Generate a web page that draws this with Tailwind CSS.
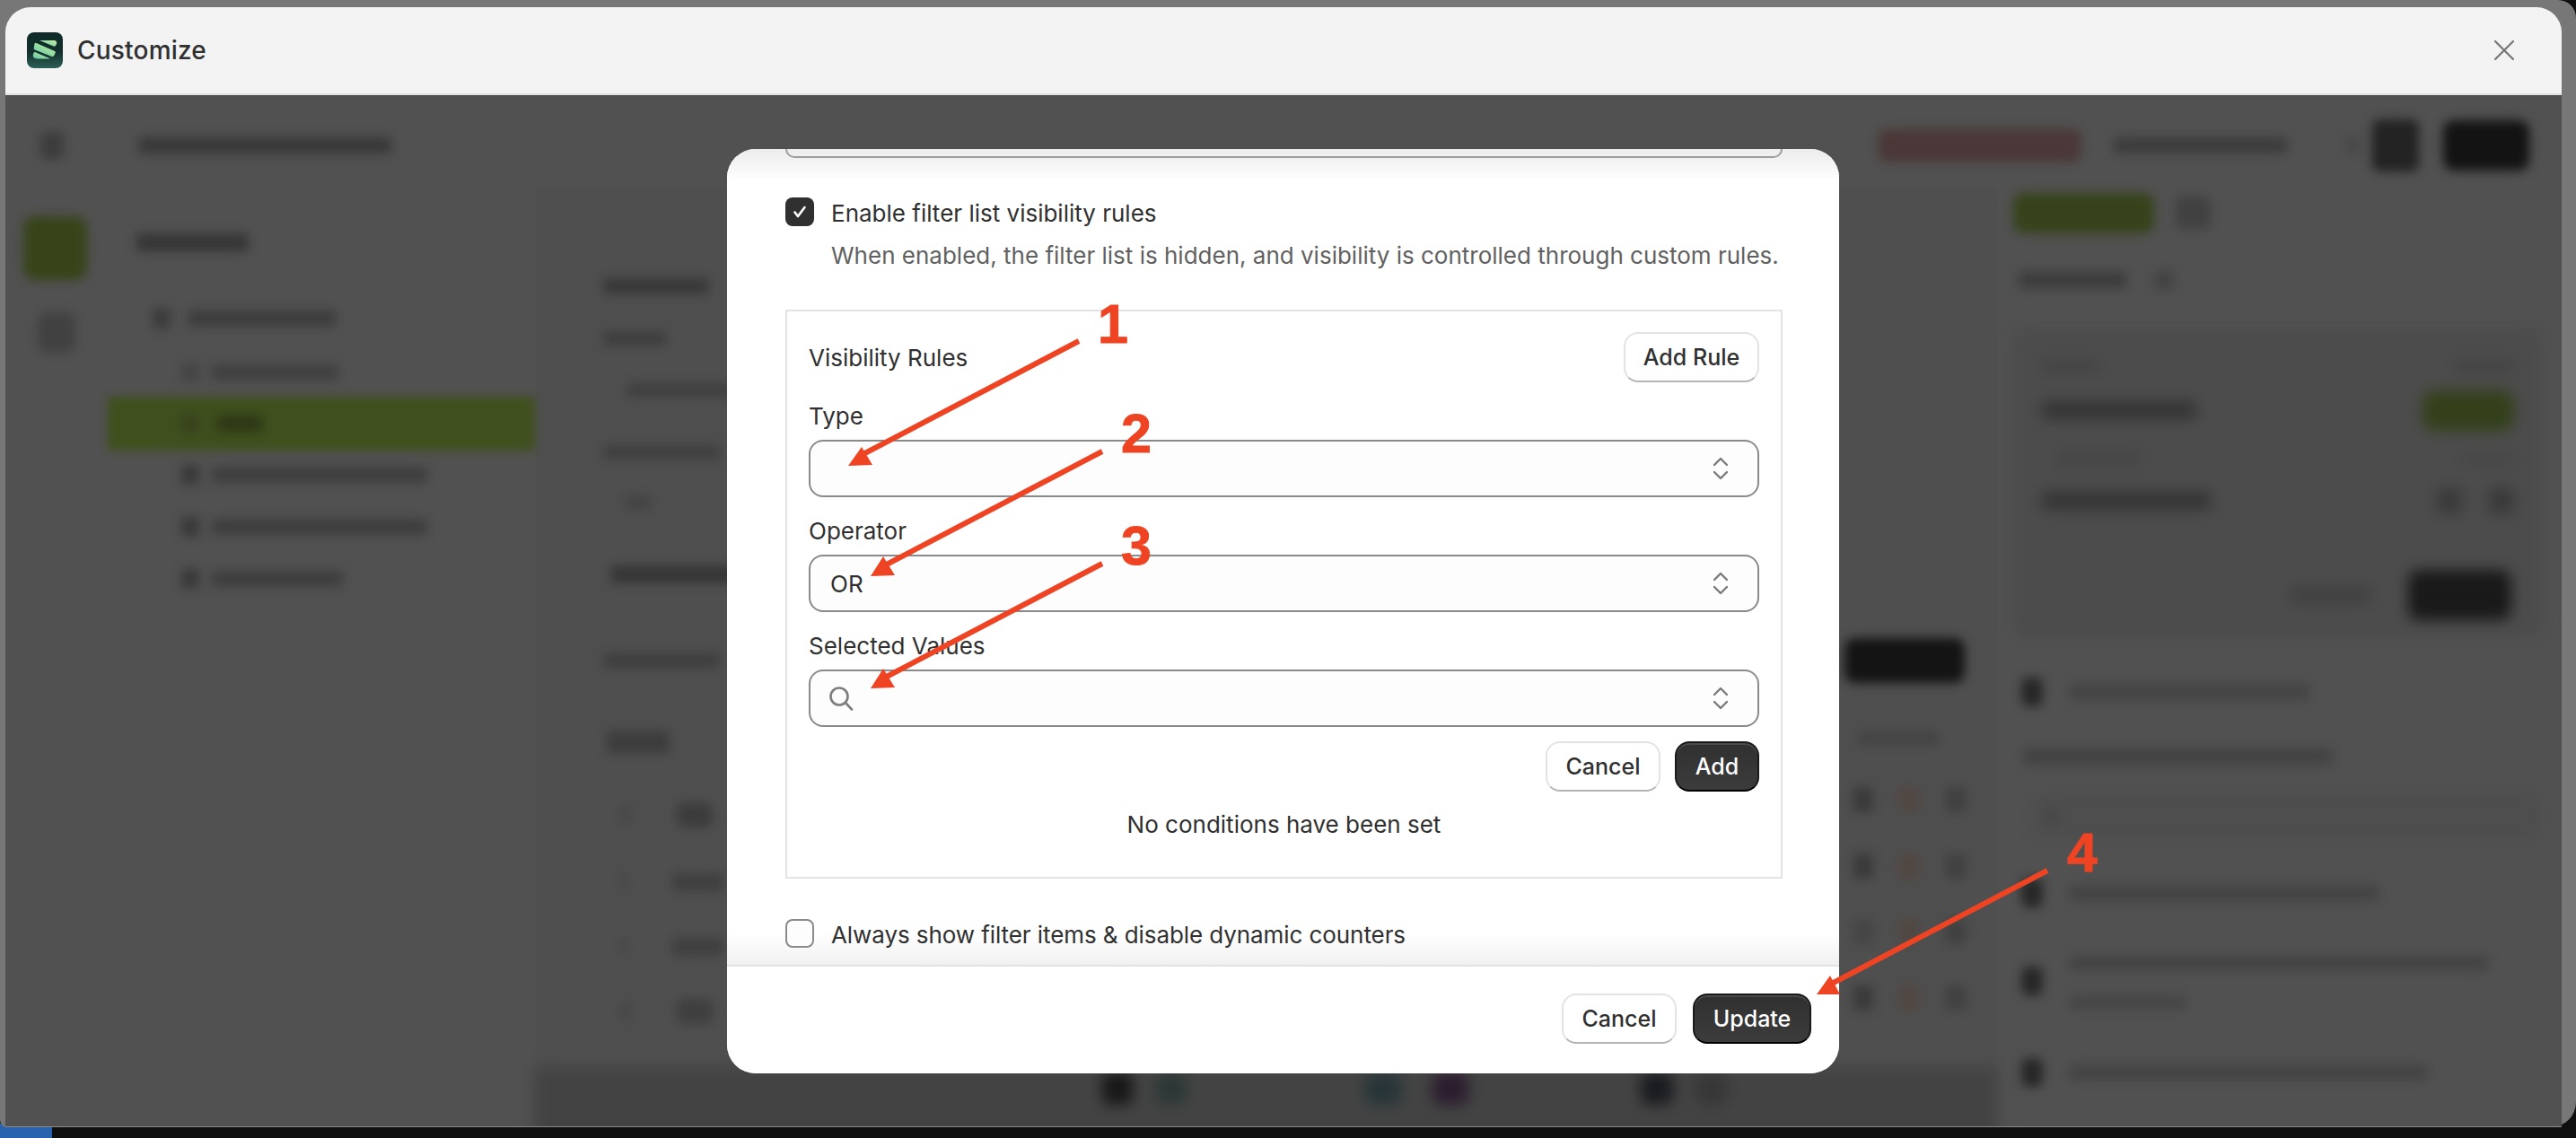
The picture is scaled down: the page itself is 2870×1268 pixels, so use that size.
<!DOCTYPE html>
<html lang="en">
<head>
<meta charset="utf-8">
<title>Customize</title>
<script src="https://cdn.jsdelivr.net/npm/@tailwindcss/browser@4"></script>
</head>
<body class="m-0 bg-[#0f0f0f]">
<div class="relative w-[2870px] h-[1268px] overflow-hidden bg-[#0f0f0f] font-['Inter',sans-serif] text-[#303030]">

  <!-- desktop strip under the window -->
  <div class="flex h-[1268px] items-end">
    <div class="w-[58px] h-[16px] bg-[#2a63ad]"></div>
  </div>

  <!-- outer dimmed frame -->
  <div class="absolute left-0 top-0 w-[2870px] h-[1256px] bg-[#777777] rounded-br-[28px] rounded-tr-[20px] rounded-bl-[8px] px-[6px] pt-[8px]">
    <div class="flex flex-col w-[2848px] h-[1247px] rounded-t-[28px] overflow-hidden">
      <!-- header -->
      <div class="flex items-center h-[98px] shrink-0 bg-[#f3f3f3] border-b-2 border-[#e3e3e3] pl-[24px] pr-[53px]">
        <svg class="w-[40px] h-[40px] shrink-0" viewBox="0 0 40 40">
          <defs>
            <linearGradient id="lg" x1="0" y1="0" x2="0" y2="1"><stop offset="0" stop-color="#0f2a28"/><stop offset=".55" stop-color="#12302d"/><stop offset="1" stop-color="#2c5f57"/></linearGradient>
            <linearGradient id="ls" x1="0" y1="1" x2="1" y2="0"><stop offset="0" stop-color="#5fc6a0"/><stop offset="1" stop-color="#c9efa4"/></linearGradient>
          </defs>
          <rect width="40" height="40" rx="8" fill="url(#lg)"/>
          <path d="M14 9h16c2.600 0 3.800 2 3 3.700l-.8 1.700c-.6 1.100-1.600 1.500-2.700 1.100L14 9Z" fill="url(#ls)"/>
          <path d="M8.500 12.700c.4-.8 1.300-1.100 2-.8l20.500 9c.9.4 1 1.400.6 2.200l-1.500 2.900c-.5.9-1.400 1.200-2.200.9L8.700 19.400c-1-.4-1.300-1.500-.9-2.400Z" fill="url(#ls)"/>
          <path d="M7.700 22.800c.4-.7 1.100-.9 1.800-.6L26 29.500H13c-3.600 0-6.200-1-6.200-3.800 0-1 .4-2 .9-2.900Z" fill="url(#ls)"/>
        </svg>
        <span class="ml-[16px] text-[28px] font-medium leading-none tracking-[0.2px]">Customize</span>
        <svg class="ml-auto w-[22px] h-[22px]" viewBox="0 0 22 22" fill="none" stroke="#757575" stroke-width="2.200" stroke-linecap="round"><path d="M1 1l20 20M21 1L1 21"/></svg>
      </div>

      <!-- blurred page behind the modal -->
      <div class="flex-1 bg-[#515151] overflow-hidden" aria-hidden="true">
        <div class="flex flex-col h-[calc(100%+24px)]">
          <!-- top bar -->
          <div class="flex items-center h-[104px] shrink-0 pt-[8px]">
            <div class="blur-[6px] ml-[39px] w-[26px] h-[30px] rounded-md bg-[#3c3c3c]"></div>
            <div class="blur-[6px] ml-[83px] w-[282px] h-[18px] rounded bg-[#383838]"></div>
            <div class="blur-[6px] ml-[1657px] w-[225px] h-[36px] rounded-lg bg-[#4b3737]"></div>
            <div class="blur-[6px] ml-[37px] w-[193px] h-[18px] rounded bg-[#3c3c3c]"></div>
            <div class="blur-[6px] ml-[67px] w-[14px] h-[20px] rounded bg-[#474747]"></div>
            <div class="blur-[6px] ml-[14px] w-[52px] h-[58px] rounded-lg bg-[#232323]"></div>
            <div class="blur-[6px] ml-[27px] w-[96px] h-[56px] rounded-xl bg-[#131313]"></div>
          </div>
          <div class="flex flex-1 min-h-0">
            <!-- rail -->
            <div class="flex flex-col w-[114px] shrink-0 pl-[20px]">
              <div class="blur-[6px] mt-[31px] w-[71px] h-[71px] rounded-xl bg-[#374419]"></div>
              <div class="blur-[6px] mt-[36px] ml-[16px] w-[42px] h-[45px] rounded-xl bg-[#414141]"></div>
            </div>
            <!-- tree -->
            <div class="flex flex-col w-[476px] shrink-0">
              <div class="blur-[6px] mt-[50px] ml-[32px] w-[125px] h-[20px] rounded bg-[#363636]"></div>
              <div class="flex items-center h-[24px] mt-[63px] ml-[50px]"><div class="blur-[6px] w-[20px] h-[24px] rounded bg-[#3c3c3c]"></div><div class="blur-[6px] ml-[20px] w-[164px] h-[18px] rounded bg-[#3c3c3c]"></div></div>
              <div class="flex items-center h-[24px] mt-[36px] ml-[82px]"><div class="blur-[6px] w-[20px] h-[20px] rounded bg-[#444444]"></div><div class="blur-[6px] ml-[14px] w-[141px] h-[18px] rounded bg-[#404040]"></div></div>
              <div class="blur-[5px] flex items-center h-[60px] mt-[15px] bg-[#40501d] pl-[82px]"><div class="blur-[4px] w-[20px] h-[22px] rounded bg-[#37421e]"></div><div class="blur-[4px] ml-[19px] w-[52px] h-[18px] rounded bg-[#2c3616]"></div></div>
              <div class="flex items-center h-[24px] mt-[15px] ml-[82px]"><div class="blur-[6px] w-[20px] h-[22px] rounded bg-[#393939]"></div><div class="blur-[6px] ml-[14px] w-[240px] h-[18px] rounded bg-[#3e3e3e]"></div></div>
              <div class="flex items-center h-[24px] mt-[34px] ml-[82px]"><div class="blur-[6px] w-[20px] h-[22px] rounded bg-[#393939]"></div><div class="blur-[6px] ml-[14px] w-[240px] h-[18px] rounded bg-[#3e3e3e]"></div></div>
              <div class="flex items-center h-[24px] mt-[34px] ml-[82px]"><div class="blur-[6px] w-[20px] h-[22px] rounded bg-[#393939]"></div><div class="blur-[6px] ml-[14px] w-[146px] h-[18px] rounded bg-[#3e3e3e]"></div></div>
            </div>
            <!-- centre -->
            <div class="flex flex-col w-[1629px] shrink-0 bg-[#4f4f4f]">
              <div class="flex flex-1 min-h-0 justify-between">
                <div class="flex flex-col w-[210px] pl-[76px]">
                  <div class="blur-[6px] mt-[100px] w-[118px] h-[18px] rounded bg-[#383838]"></div>
                  <div class="blur-[6px] mt-[41px] w-[71px] h-[16px] rounded bg-[#3e3e3e]"></div>
                  <div class="blur-[6px] mt-[42px] ml-[26px] w-[120px] h-[16px] rounded bg-[#404040]"></div>
                  <div class="blur-[6px] mt-[53px] w-[130px] h-[16px] rounded bg-[#3f3f3f]"></div>
                  <div class="blur-[6px] mt-[40px] ml-[24px] w-[30px] h-[16px] rounded bg-[#444444]"></div>
                  <div class="blur-[6px] mt-[62px] ml-[8px] w-[140px] h-[20px] rounded bg-[#363636]"></div>
                  <div class="blur-[6px] mt-[77px] w-[130px] h-[18px] rounded bg-[#3f3f3f]"></div>
                  <div class="blur-[6px] mt-[69px] ml-[4px] w-[70px] h-[26px] rounded bg-[#3d3d3d]"></div>
                  <div class="flex items-center gap-[50px] mt-[53px] h-[30px] ml-[18px]"><div class="blur-[6px] w-[14px] h-[22px] rounded bg-[#484848]"></div><div class="blur-[6px] w-[40px] h-[28px] rounded-lg bg-[#3c3c3c]"></div></div>
                  <div class="flex items-center gap-[50px] mt-[45px] h-[30px] ml-[18px]"><div class="blur-[6px] w-[14px] h-[22px] rounded bg-[#484848]"></div><div class="blur-[6px] w-[90px] h-[20px] rounded bg-[#3f3f3f]"></div></div>
                  <div class="flex items-center gap-[50px] mt-[42px] h-[30px] ml-[18px]"><div class="blur-[6px] w-[14px] h-[22px] rounded bg-[#484848]"></div><div class="blur-[6px] w-[90px] h-[20px] rounded bg-[#3f3f3f]"></div></div>
                  <div class="flex items-center gap-[50px] mt-[42px] h-[30px] ml-[18px]"><div class="blur-[6px] w-[14px] h-[22px] rounded bg-[#484848]"></div><div class="blur-[6px] w-[40px] h-[28px] rounded-lg bg-[#3f3f3f]"></div></div>
                </div>
                <div class="flex flex-col w-[180px]">
                  <div class="blur-[6px] mt-[501px] ml-[10px] w-[134px] h-[50px] rounded-xl bg-[#141414]"></div>
                  <div class="blur-[6px] mt-[54px] ml-[25px] w-[90px] h-[16px] rounded bg-[#444444]"></div>
                  <div class="flex items-center mt-[44px] h-[32px] pl-[20px]"><div class="blur-[6px] w-[22px] h-[28px] rounded bg-[#3a3a3a]"></div><div class="blur-[6px] ml-[29px] w-[22px] h-[28px] rounded bg-[#514742]"></div><div class="blur-[6px] ml-[29px] w-[24px] h-[28px] rounded bg-[#414141]"></div></div>
                  <div class="flex items-center mt-[42px] h-[32px] pl-[20px]"><div class="blur-[6px] w-[22px] h-[28px] rounded bg-[#3a3a3a]"></div><div class="blur-[6px] ml-[29px] w-[22px] h-[28px] rounded bg-[#514742]"></div><div class="blur-[6px] ml-[29px] w-[24px] h-[28px] rounded bg-[#414141]"></div></div>
                  <div class="flex items-center mt-[41px] h-[32px] pl-[20px]"><div class="blur-[6px] w-[22px] h-[28px] rounded bg-[#454545]"></div><div class="blur-[6px] ml-[29px] w-[22px] h-[28px] rounded bg-[#514742]"></div><div class="blur-[6px] ml-[29px] w-[24px] h-[28px] rounded bg-[#414141]"></div></div>
                  <div class="flex items-center mt-[42px] h-[32px] pl-[20px]"><div class="blur-[6px] w-[22px] h-[28px] rounded bg-[#3a3a3a]"></div><div class="blur-[6px] ml-[29px] w-[22px] h-[28px] rounded bg-[#514742]"></div><div class="blur-[6px] ml-[29px] w-[24px] h-[28px] rounded bg-[#414141]"></div></div>
                </div>
              </div>
              <!-- lower band -->
              <div class="blur-[8px] flex items-center h-[90px] shrink-0 bg-[#434343] pb-[42px] pl-[632px]">
                <div class="w-[34px] h-[36px] rounded-lg bg-[#171717]"></div>
                <div class="ml-[26px] w-[34px] h-[36px] rounded-lg bg-[#2c3836]"></div>
                <div class="ml-[199px] w-[40px] h-[36px] rounded-lg bg-[#273538]"></div>
                <div class="ml-[35px] w-[40px] h-[36px] rounded-lg bg-[#2b1c2e]"></div>
                <div class="ml-[192px] w-[36px] h-[36px] rounded-lg bg-[#1a1b20]"></div>
                <div class="ml-[25px] w-[36px] h-[36px] rounded-lg bg-[#373737]"></div>
              </div>
            </div>
            <!-- right panel -->
            <div class="flex flex-col flex-1 min-w-0 pl-[18px]">
              <div class="flex items-center mt-[4px] h-[46px]"><div class="blur-[6px] w-[157px] h-[45px] rounded-xl bg-[#36431a]"></div><div class="blur-[6px] ml-[24px] w-[39px] h-[36px] rounded-lg bg-[#414141]"></div></div>
              <div class="flex items-center mt-[40px] h-[24px]"><div class="blur-[6px] ml-[6px] w-[120px] h-[18px] rounded bg-[#3c3c3c]"></div><div class="blur-[6px] ml-[30px] w-[24px] h-[24px] rounded-full bg-[#434343]"></div></div>
              <div class="blur-[8px] flex flex-col mt-[42px] w-[590px] h-[344px] rounded-2xl bg-[#4c4c4c] px-[32px] pt-[32px]">
                <div class="flex justify-between items-center h-[20px]"><div class="w-[63px] h-[14px] rounded bg-[#434343]"></div><div class="w-[68px] h-[14px] rounded bg-[#434343]"></div></div>
                <div class="flex justify-between items-center h-[46px] mt-[16px]"><div class="w-[172px] h-[20px] rounded bg-[#343434]"></div><div class="w-[102px] h-[45px] rounded-xl bg-[#33401a]"></div></div>
                <div class="flex justify-between items-center h-[16px] mt-[23px]"><div class="ml-[15px] w-[95px] h-[14px] rounded bg-[#454545]"></div><div class="w-[60px] h-[14px] rounded bg-[#474747]"></div></div>
                <div class="flex justify-between items-center h-[32px] mt-[23px]"><div class="w-[188px] h-[20px] rounded bg-[#343434]"></div><div class="flex gap-[30px]"><div class="w-[28px] h-[28px] rounded bg-[#393939]"></div><div class="w-[28px] h-[28px] rounded bg-[#393939]"></div></div></div>
                <div class="flex justify-end items-center mt-[60px] h-[58px] pr-[3px]"><div class="w-[89px] h-[20px] rounded bg-[#414141]"></div><div class="ml-[42px] w-[115px] h-[56px] rounded-xl bg-[#191919]"></div></div>
              </div>
              <div class="flex items-center mt-[43px] h-[36px] pl-[9px]"><div class="blur-[6px] w-[24px] h-[32px] rounded-lg bg-[#272727]"></div><div class="blur-[6px] ml-[30px] w-[267px] h-[18px] rounded bg-[#444444]"></div></div>
              <div class="blur-[6px] mt-[45px] ml-[11px] w-[345px] h-[18px] rounded bg-[#434343]"></div>
              <div class="blur-[6px] flex items-center mt-[33px] ml-[21px] pl-[14px] w-[565px] h-[50px] rounded-lg bg-[#4e4e4e]"><div class="w-[16px] h-[22px] rounded bg-[#484848]"></div></div>
              <div class="flex items-center mt-[42px] h-[36px] pl-[9px]"><div class="blur-[6px] w-[24px] h-[32px] rounded-lg bg-[#272727]"></div><div class="blur-[6px] ml-[30px] w-[345px] h-[18px] rounded bg-[#444444]"></div></div>
              <div class="flex items-start mt-[52px] pl-[9px]"><div class="blur-[6px] mt-[12px] w-[24px] h-[32px] rounded-lg bg-[#272727]"></div><div class="ml-[30px] flex flex-col gap-[28px]"><div class="blur-[6px] w-[466px] h-[16px] rounded bg-[#434343]"></div><div class="blur-[6px] w-[130px] h-[16px] rounded bg-[#464646]"></div></div></div>
              <div class="flex items-center mt-[52px] h-[36px] pl-[9px]"><div class="blur-[6px] w-[24px] h-[32px] rounded-lg bg-[#272727]"></div><div class="blur-[6px] ml-[30px] w-[398px] h-[18px] rounded bg-[#444444]"></div></div>
            </div>
          </div>
        </div>
      </div>
    </div>
  </div>
  <div class="absolute left-[6px] top-[1255px] w-[2848px] h-px bg-[#8a8a8a]"></div>

  <!-- modal -->
  <div class="absolute left-[810px] top-[166px] flex flex-col w-[1239px] h-[1030px] rounded-[32px] bg-white overflow-hidden">
    <div class="relative flex flex-col flex-1 min-h-0 px-[65px]">
      <div class="absolute inset-x-0 top-0 h-[36px] bg-linear-to-b from-[#ececec] to-white"></div>
      <div class="absolute inset-x-0 bottom-0 h-[36px] bg-linear-to-b from-white to-[#f1f1f1]"></div>
      <div class="relative h-[10px] w-[1111px] shrink-0 rounded-b-[16px] border-x-2 border-b-2 border-[#8a8a8a]/80"></div>

      <label class="relative mt-[44px] flex items-center gap-[19px] h-[32px]">
        <span class="flex items-center justify-center w-[32px] h-[32px] rounded-[8px] bg-[#303030]">
          <svg class="w-[20px] h-[20px]" viewBox="0 0 20 20" fill="none" stroke="#fff" stroke-width="2.600" stroke-linecap="round" stroke-linejoin="round"><path d="M4.500 10.500 8 15l7.500-10"/></svg>
        </span>
        <span class="pt-[3px] text-[26px] leading-[32px]">Enable filter list visibility rules</span>
      </label>
      <p class="relative mt-[15px] ml-[51px] text-[26px] leading-[36px] text-[#616161] whitespace-nowrap">When enabled, the filter list is hidden, and visibility is controlled through custom rules.</p>

      <div class="relative mt-[42px] flex flex-col w-[1111px] h-[634px] border-2 border-[#e3e3e3] px-[24px] pt-[23px] bg-white">
        <div class="flex items-center justify-between h-[56px]">
          <span class="text-[26px]">Visibility Rules</span>
          <button class="h-[56px] w-[151px] pt-[2px] rounded-[16px] bg-white border-2 border-[#e3e3e3] border-b-[#b5b5b5] text-[25px] font-medium">Add Rule</button>
        </div>
        <div class="mt-[20px] text-[26px] leading-[36px]">Type</div>
        <div class="mt-[8px] flex items-center h-[64px] rounded-[16px] border-2 border-[#8a8a8a] bg-[#fdfdfd] pl-[22px] pr-[32px]">
          <svg class="ml-auto w-[18px] h-[26px]" viewBox="0 0 18 26" fill="none" stroke="#7a7a7a" stroke-width="2.400" stroke-linecap="round" stroke-linejoin="round"><path d="M2 9l7-7 7 7M2 17l7 7 7-7"/></svg>
        </div>
        <div class="mt-[20px] text-[26px] leading-[36px]">Operator</div>
        <div class="mt-[8px] flex items-center h-[64px] rounded-[16px] border-2 border-[#8a8a8a] bg-[#fdfdfd] pl-[22px] pr-[32px]">
          <span class="text-[26px]">OR</span>
          <svg class="ml-auto w-[18px] h-[26px]" viewBox="0 0 18 26" fill="none" stroke="#7a7a7a" stroke-width="2.400" stroke-linecap="round" stroke-linejoin="round"><path d="M2 9l7-7 7 7M2 17l7 7 7-7"/></svg>
        </div>
        <div class="mt-[20px] text-[26px] leading-[36px]">Selected Values</div>
        <div class="mt-[8px] flex items-center h-[64px] rounded-[16px] border-2 border-[#8a8a8a] bg-[#fdfdfd] pl-[20px] pr-[32px]">
          <svg class="w-[28px] h-[28px]" viewBox="0 0 28 28" fill="none" stroke="#7d7d7d" stroke-width="2.600" stroke-linecap="round"><circle cx="12" cy="12" r="9.500"/><path d="M19 19l7 7.500"/></svg>
          <svg class="ml-auto w-[18px] h-[26px]" viewBox="0 0 18 26" fill="none" stroke="#7a7a7a" stroke-width="2.400" stroke-linecap="round" stroke-linejoin="round"><path d="M2 9l7-7 7 7M2 17l7 7 7-7"/></svg>
        </div>
        <div class="mt-[16px] flex justify-end gap-[16px]">
          <button class="h-[56px] w-[128px] pt-[2px] rounded-[16px] bg-white border-2 border-[#e3e3e3] border-b-[#b5b5b5] text-[25px] font-medium">Cancel</button>
          <button class="h-[56px] w-[94px] pt-[2px] rounded-[16px] bg-linear-to-b from-[#303030] to-[#3c3c3c] border-2 border-[#1a1a1a] border-b-[#000] text-white text-[25px] font-medium shadow-[inset_0_2px_0_#4a4a4a]">Add</button>
        </div>
        <div class="mt-[19px] text-center text-[26px] leading-[36px]">No conditions have been set</div>
      </div>

      <label class="relative mt-[45px] flex items-center gap-[19px] h-[32px]">
        <span class="w-[32px] h-[32px] rounded-[8px] border-2 border-[#8a8a8a] bg-[#fdfdfd]"></span>
        <span class="pt-[3px] text-[26px] leading-[32px] tracking-[-0.08px]">Always show filter items &amp; disable dynamic counters</span>
      </label>
    </div>
    <div class="flex items-center justify-end gap-[18px] h-[121px] shrink-0 border-t-2 border-[#e3e3e3] bg-white pr-[31px] pb-[3px]">
      <button class="h-[56px] w-[128px] pt-[2px] rounded-[16px] bg-white border-2 border-[#e3e3e3] border-b-[#b5b5b5] text-[25px] font-medium">Cancel</button>
      <button class="h-[56px] w-[132px] pt-[2px] rounded-[16px] bg-linear-to-b from-[#303030] to-[#3c3c3c] border-2 border-[#1a1a1a] border-b-[#000] text-white text-[25px] font-medium shadow-[inset_0_2px_0_#4a4a4a]">Update</button>
    </div>
  </div>

  <!-- annotation arrows -->
  <svg class="absolute left-0 top-0 w-[2870px] h-[1268px] pointer-events-none" viewBox="0 0 2870 1268" fill="#ee4423" stroke="none">
    <g stroke="#ee4423" stroke-width="6">
      <path d="M1202 380 958 508"/>
      <path d="M1228 503 982 632"/>
      <path d="M1228 628 982 757"/>
      <path d="M2281 970 2037 1098"/>
    </g>
    <path d="M945 519 960 498 972 518Z"/>
    <path d="M970 642 984 620 997 641Z"/>
    <path d="M970 767 984 745 997 766Z"/>
    <path d="M2024 1108 2039 1087 2050 1108Z"/>
    <g font-family="'Liberation Sans', Arial, sans-serif" font-weight="700" font-size="61" stroke="#ee4423" stroke-width="1">
      <text x="1223" y="382">1</text>
      <text x="1249" y="504">2</text>
      <text x="1249" y="629">3</text>
      <text x="2303" y="971">4</text>
    </g>
  </svg>
</div>
</body>
</html>
